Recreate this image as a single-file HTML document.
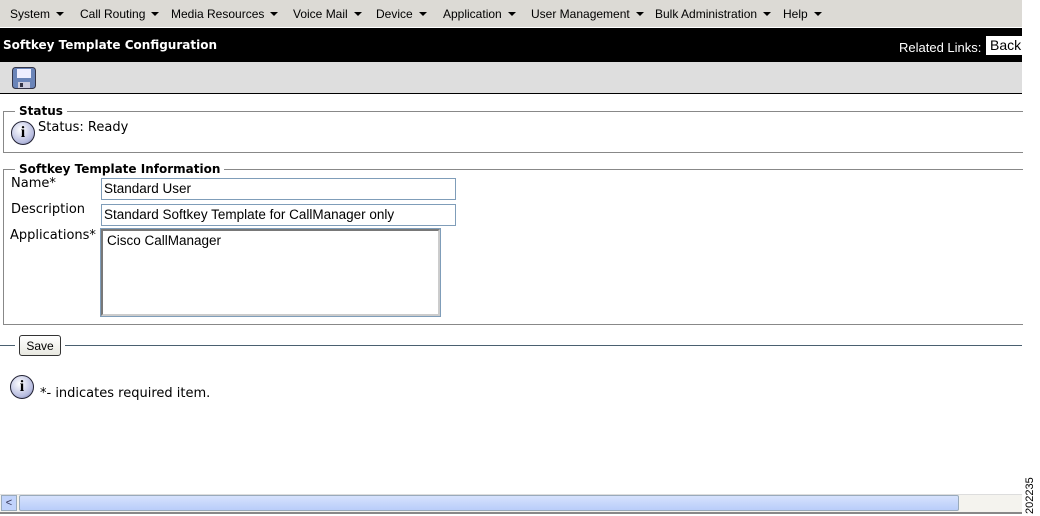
<!DOCTYPE html><html><head><style>
body{margin:0;width:1040px;height:516px;position:relative;background:#fff;font-family:"Liberation Sans",sans-serif;overflow:hidden}
.a{position:absolute}
.nav{left:0;top:0;width:1022px;height:27px;background:#dcdad5;font-size:12px;color:#000}
.nav span{position:absolute;top:7px}
.tri{display:inline-block;width:0;height:0;border-left:4px solid transparent;border-right:4px solid transparent;border-top:4px solid #000;margin-left:6px;vertical-align:2px}
.b{font-family:"DejaVu Sans",sans-serif;font-weight:bold;font-size:12px}
.fs{border:1px solid #888;border-right:none}
.lg{background:#fff;padding:0 4px;font-family:"DejaVu Sans",sans-serif;font-weight:bold;font-size:12px}
.in{border:1px solid #7f9db9;background:#fff;font-size:13.5px;padding-left:2px;box-sizing:border-box}
.lb{font-family:"DejaVu Sans",sans-serif;font-size:13px}
.ic{width:24px;height:24px;border-radius:50%;background:radial-gradient(circle at 40% 35%,#fff,#b8bde0 65%,#6a70a0);border:1px solid #223;box-sizing:border-box;text-align:center;font:bold 16px/22px "Liberation Serif",serif}
</style></head><body>
<div class="a nav">
<span style="left:10px">System<i class="tri"></i></span>
<span style="left:80px">Call Routing<i class="tri"></i></span>
<span style="left:171px">Media Resources<i class="tri"></i></span>
<span style="left:293px">Voice Mail<i class="tri"></i></span>
<span style="left:376px">Device<i class="tri"></i></span>
<span style="left:443px">Application<i class="tri"></i></span>
<span style="left:531px">User Management<i class="tri"></i></span>
<span style="left:655px">Bulk Administration<i class="tri"></i></span>
<span style="left:783px">Help<i class="tri"></i></span>
</div>
<div class="a" style="left:0;top:28px;width:1022px;height:34px;background:#000;color:#fff">
<div class="a b" style="left:3px;top:10px">Softkey Template Configuration</div>
<div class="a" style="left:899px;top:12px;font-size:13px">Related Links:</div>
<div class="a" style="left:986px;top:8px;width:36px;height:19px;background:#fff;color:#000;font-size:14px;line-height:19px;padding-left:4px;box-sizing:border-box">Back</div>
</div>
<div class="a" style="left:0;top:62px;width:1022px;height:31px;background:#dedede;border-bottom:1px solid #000"></div>
<svg class="a" style="left:12px;top:67px" width="24" height="22"><rect x="0.5" y="0.5" width="23" height="21" rx="3" fill="#6a84b8" stroke="#334"/><rect x="5" y="2" width="14" height="9" fill="#eef"/><rect x="6" y="15" width="12" height="6" fill="#ccd"/><rect x="8" y="16" width="3" height="4" fill="#334"/></svg>
<div class="a fs" style="left:3px;top:111px;width:1019px;height:40px"></div>
<div class="a lg" style="left:15px;top:104px">Status</div>
<div class="a ic" style="left:11px;top:121px">i</div>
<div class="a lb" style="left:38px;top:120px">Status: Ready</div>
<div class="a fs" style="left:3px;top:169px;width:1019px;height:154px"></div>
<div class="a lg" style="left:15px;top:162px">Softkey Template Information</div>
<div class="a lb" style="left:11px;top:176px">Name*</div>
<div class="a lb" style="left:11px;top:202px">Description</div>
<div class="a lb" style="left:10px;top:228px">Applications*</div>
<div class="a in" style="left:101px;top:178px;width:355px;height:22px;line-height:20px">Standard User</div>
<div class="a in" style="left:101px;top:204px;width:355px;height:22px;line-height:20px">Standard Softkey Template for CallManager only</div>
<div class="a in" style="left:101px;top:229px;width:339px;height:87px;padding:2px 4px;border:2px inset #ccc;outline:1px solid #7f9db9">Cisco CallManager</div>
<div class="a" style="left:0;top:345px;width:1022px;height:1px;background:#4a6070"></div>
<div class="a" style="left:19px;top:335px;width:42px;height:21px;border:1px solid #333;border-radius:3px;background:linear-gradient(#fff,#e8e8e0);font-size:12px;text-align:center;line-height:20px;box-sizing:border-box;box-shadow:0 0 0 4px #fff">Save</div>
<div class="a ic" style="left:10px;top:375px">i</div>
<div class="a lb" style="left:40px;top:386px">*- indicates required item.</div>
<div class="a" style="left:0;top:494px;width:1022px;height:18px;background:#f4f3ee;border-top:1px solid #ddd"></div>
<div class="a" style="left:1px;top:495px;width:16px;height:16px;background:#c1d3fb;border:1px solid #9ab;box-sizing:border-box;font-size:11px;line-height:14px;text-align:center;color:#335">&lt;</div>
<div class="a" style="left:19px;top:495px;width:940px;height:16px;background:linear-gradient(#d6e2fd,#b9cdf9);border:1px solid #9ab;border-radius:2px;box-sizing:border-box"></div>
<div class="a" style="left:0;top:512px;width:1022px;height:2px;background:#888"></div>
<div class="a" style="left:1022px;top:464px;width:16px;height:50px;font-size:11px;writing-mode:vertical-rl;transform:rotate(180deg);line-height:16px">202235</div>
</body></html>
